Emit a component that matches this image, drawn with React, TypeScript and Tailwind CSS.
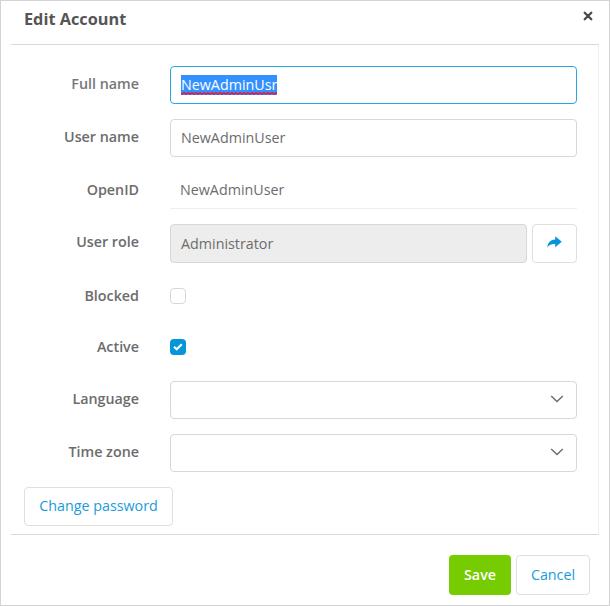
import type { ReactNode } from "react";

function Row({ label, height, labelClass = "pb-[2px]", children }: { label: string; height: string; labelClass?: string; children: ReactNode }) {
  return (
    <div className={`flex items-center ${height}`}>
      <div className={`mr-[31px] w-[128px] shrink-0 text-right font-semibold ${labelClass}`}>{label}</div>
      {children}
    </div>
  );
}

function Select() {
  return (
    <div className="flex h-[38px] w-[407px] items-center justify-end rounded-[4px] border border-[#d7d7d7] pr-[12px]">
      <svg width="14" height="10" viewBox="0 0 14 10" fill="none" stroke="#6c6c6c" strokeWidth="1.4" className="mb-[3px]">
        <path d="M1.2 2 7 7.6 12.8 2" />
      </svg>
    </div>
  );
}

export default function App() {
  return (
    <div className="flex h-[606px] w-[610px] flex-col border border-[#d3d3d3] bg-white px-[10px] font-['Open_Sans','Noto_Sans',sans-serif] text-[14.3px] leading-[20px] text-[#6c6c6c]">
      <header className="flex h-[43px] shrink-0 justify-between pl-[13px] pr-[6px]">
        <h1 className="mt-[6px] text-[16.3px] leading-[24px] font-bold text-[#555]">Edit Account</h1>
        <svg width="10" height="10" viewBox="0 0 10 10" className="mt-[10px]" stroke="#4b4b4b" strokeWidth="2.3" strokeLinecap="round">
          <path d="M1.7 1.7 8.3 8.3M8.3 1.7 1.7 8.3" />
        </svg>
      </header>

      <main className="h-[491px] w-[588px] shrink-0 border-y border-r border-y-[#d9d9d9] border-r-[#efefef]">
        <div className="flex flex-col pt-[21px]">
          <Row label="Full name" height="h-[38px]" labelClass="pb-[2px] text-[#777]">
            <div className="flex h-[38px] w-[407px] items-center rounded-[4px] border border-[#2ba6e0] pl-[10px]">
              <span className="relative h-[20px] bg-[#3390ff] text-white">
                NewAdminUsr
                <svg className="absolute bottom-0 left-0 w-full" height="3" fill="none">
                  <defs>
                    <pattern id="squiggle" width="4" height="3" patternUnits="userSpaceOnUse">
                      <path d="M-1 .5 1 2.3 3 .5 5 2.3" stroke="#d8204c" strokeWidth="1.5" />
                    </pattern>
                  </defs>
                  <rect width="100%" height="3" fill="url(#squiggle)" />
                </svg>
              </span>
            </div>
          </Row>
          <div className="h-[15px]" />
          <Row label="User name" height="h-[38px]">
            <div className="flex h-[38px] w-[407px] items-center rounded-[4px] border border-[#d7d7d7] pl-[10px]">NewAdminUser</div>
          </Row>
          <div className="h-[15px]" />
          <Row label="OpenID" height="h-[37px]" labelClass="pb-[1px]">
            <div className="flex h-[37px] w-[407px] items-center border-b border-[#eee] pl-[10px]">NewAdminUser</div>
          </Row>
          <div className="h-[15px]" />
          <Row label="User role" height="h-[39px]" labelClass="pb-[3px]">
            <div className="flex h-[39px] w-[357px] items-center rounded-[4px] border border-[#d7d7d7] bg-[#ededed] pl-[10px]">Administrator</div>
            <button className="ml-[5px] flex h-[39px] w-[45px] items-center justify-center rounded-[4px] border border-[#dfdfdf]">
              <svg width="15" height="12" viewBox="0 0 15 12" fill="#0595db" className="mb-[3px]">
                <path d="M8.2.2 14.8 5.7 8.2 11.2V8.1C4.7 7.8 2.4 8.7.4 11.4.6 6.8 3.2 3.8 8.2 3.4Z" />
              </svg>
            </button>
          </Row>
          <div className="h-[25px]" />
          <Row label="Blocked" height="h-[16px]" labelClass="pb-0">
            <span className="size-[16px] rounded-[4px] border border-[#d7d7d7]" />
          </Row>
          <div className="h-[35px]" />
          <Row label="Active" height="h-[16px]" labelClass="pb-0">
            <span className="flex size-[16px] items-center justify-center rounded-[4px] bg-[#0595db]">
              <svg width="10" height="8" viewBox="0 0 10 8" fill="none" stroke="#fff" strokeWidth="2.2">
                <path d="M1 3.7 3.7 6.2 8.8 1.2" />
              </svg>
            </span>
          </Row>
          <div className="h-[26px]" />
          <Row label="Language" height="h-[38px]">
            <Select />
          </Row>
          <div className="h-[15px]" />
          <Row label="Time zone" height="h-[38px]">
            <Select />
          </Row>
          <button className="mt-[15px] ml-[13px] h-[39px] w-[149px] rounded-[4px] border border-[#dfdfdf] pb-[1px] text-[#1a9bdc]">Change password</button>
        </div>
      </main>

      <footer className="mt-[20px] flex justify-end gap-[5px] pr-[9px]">
        <button className="h-[40px] w-[62px] rounded-[4px] bg-[#76cc00] font-semibold text-white">Save</button>
        <button className="h-[40px] w-[74px] rounded-[4px] border border-[#dfdfdf] text-[#1a9bdc]">Cancel</button>
      </footer>
    </div>
  );
}
